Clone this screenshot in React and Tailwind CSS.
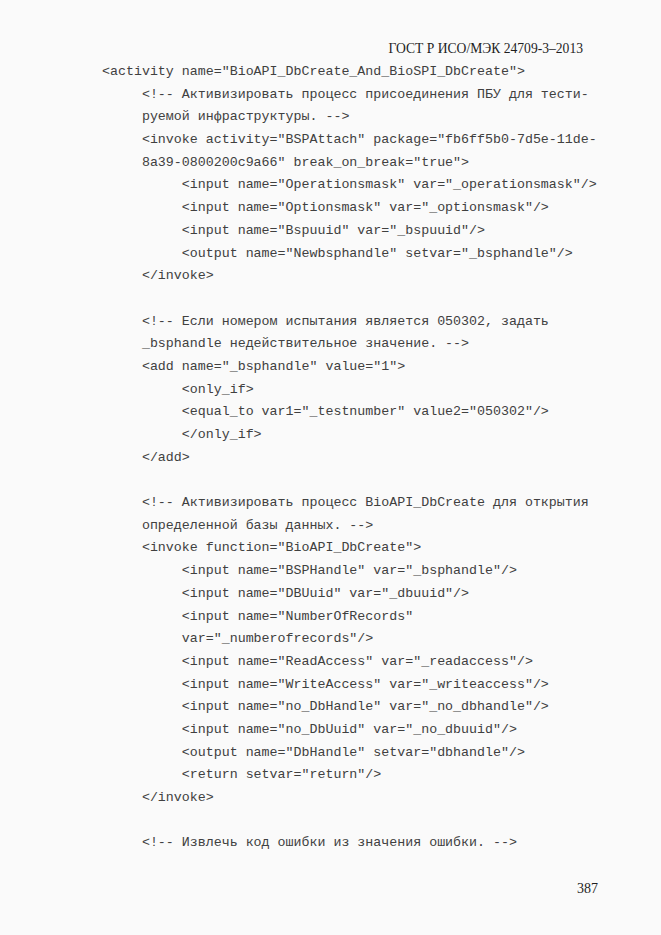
import React from 'react';

const lines = [
  '<activity name="BioAPI_DbCreate_And_BioSPI_DbCreate">',
  '     <!-- Активизировать процесс присоединения ПБУ для тести-',
  '     руемой инфраструктуры. -->',
  '     <invoke activity="BSPAttach" package="fb6ff5b0-7d5e-11de-',
  '     8a39-0800200c9a66" break_on_break="true">',
  '          <input name="Operationsmask" var="_operationsmask"/>',
  '          <input name="Optionsmask" var="_optionsmask"/>',
  '          <input name="Bspuuid" var="_bspuuid"/>',
  '          <output name="Newbsphandle" setvar="_bsphandle"/>',
  '     </invoke>',
  '',
  '     <!-- Если номером испытания является 050302, задать',
  '     _bsphandle недействительное значение. -->',
  '     <add name="_bsphandle" value="1">',
  '          <only_if>',
  '          <equal_to var1="_testnumber" value2="050302"/>',
  '          </only_if>',
  '     </add>',
  '',
  '     <!-- Активизировать процесс BioAPI_DbCreate для открытия',
  '     определенной базы данных. -->',
  '     <invoke function="BioAPI_DbCreate">',
  '          <input name="BSPHandle" var="_bsphandle"/>',
  '          <input name="DBUuid" var="_dbuuid"/>',
  '          <input name="NumberOfRecords"',
  '          var="_numberofrecords"/>',
  '          <input name="ReadAccess" var="_readaccess"/>',
  '          <input name="WriteAccess" var="_writeaccess"/>',
  '          <input name="no_DbHandle" var="_no_dbhandle"/>',
  '          <input name="no_DbUuid" var="_no_dbuuid"/>',
  '          <output name="DbHandle" setvar="dbhandle"/>',
  '          <return setvar="return"/>',
  '     </invoke>',
  '',
  '     <!-- Извлечь код ошибки из значения ошибки. -->',
];

export default function App() {
  return (
    <div className="w-[661px] h-[935px] bg-[#fafafa] text-[#2b2b2b] flex flex-col">
      <div className="pt-[40px] pr-[78px] flex justify-end font-['Liberation_Serif',serif] text-[13.6px] leading-[18px] text-[#1e1e1e]">
        ГОСТ Р ИСО/МЭК 24709-3–2013
      </div>
      <div className="pt-[3px] pl-[102px] font-['Liberation_Mono',monospace] text-[13.3px] text-[#404040]">
        {lines.map((line, i) => (
          <div key={i} className="h-[22.7px] leading-[22.7px] whitespace-pre">
            {line}
          </div>
        ))}
      </div>
      <div className="mt-[25px] pr-[63px] flex justify-end font-['Liberation_Serif',serif] text-[14px] leading-[18px] text-[#1e1e1e]">
        387
      </div>
    </div>
  );
}
